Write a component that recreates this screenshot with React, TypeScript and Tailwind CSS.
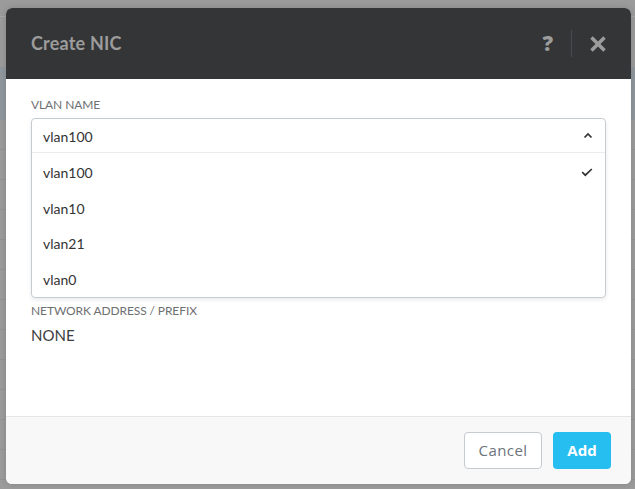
import React from "react";

const options = ["vlan100", "vlan10", "vlan21", "vlan0"];

export default function App() {
  return (
    <div className="relative w-[635px] h-[489px] overflow-hidden bg-[#9b9b9b]" style={{ fontFamily: "Lato, 'Open Sans', sans-serif" }}>
      {/* dimmed page behind */}
      <div className="flex flex-col">
        <div className="h-[17px] border-b border-[#a8a8a8]" />
        <div className="h-[50px]" />
        <div className="h-[53px] bg-[#8f979d]" />
        {Array.from({ length: 12 }).map((_, i) => (
          <div key={i} className="h-[30px] border-b border-[#939393]" />
        ))}
      </div>

      {/* modal */}
      <div className="absolute left-[6px] top-[8px] w-[625px] h-[476px] flex flex-col rounded-[6px] overflow-hidden bg-white shadow-[0_0_6px_rgba(0,0,0,0.15)]">
        <div className="h-[71px] shrink-0 bg-[#343537] flex items-center justify-between pl-[25px] pr-[24px]">
          <span className="text-[18px] font-bold text-[#9c9c9c] tracking-[0.2px]">Create NIC</span>
          <div className="flex items-center h-full">
            <span className="text-[21px] font-black text-[#9c9c9c] leading-none mr-[18px]" style={{ fontFamily: "'Open Sans', sans-serif" }}>?</span>
            <div className="w-px h-[27px] bg-[#4a4b4e]" />
            <svg width="18" height="16" viewBox="0 0 18 16" className="ml-[17px]">
              <path d="M2.5 1.5 L15.5 14.5 M15.5 1.5 L2.5 14.5" stroke="#9c9c9c" strokeWidth="3.6" strokeLinecap="butt" />
            </svg>
          </div>
        </div>

        <div className="flex-1 flex flex-col px-[25px] pt-[18px]">
          <div className="text-[12px] leading-[16px] text-[#6e6f71] tracking-[-0.1px]">VLAN NAME</div>
          <div className="mt-[5px] w-[575px] flex flex-col rounded-[4px] border border-[#c6cbd0] bg-white shadow-[0_2px_4px_rgba(0,0,0,0.08)]">
            <div className="h-[34px] flex items-center justify-between pl-[11px] pr-[12px] pt-[2px] border-b border-[#ececec]">
              <span className="text-[14px] text-[#333]">vlan100</span>
              <svg width="10" height="7" viewBox="0 0 10 7" className="-mt-[2px]">
                <path d="M1.5 5.5 L5 2 L8.5 5.5" fill="none" stroke="#333" strokeWidth="1.7" />
              </svg>
            </div>
            <div className="flex flex-col pt-[2px]">
              {options.map((o, i) => (
                <div key={o} className="h-[35.5px] flex items-center justify-between pl-[11px] pr-[12px]">
                  <span className="text-[14px] text-[#333]">{o}</span>
                  {i === 0 && (
                    <svg width="12" height="9" viewBox="0 0 12 9">
                      <path d="M1.2 4.2 L4.3 7.2 L10.8 1" fill="none" stroke="#333" strokeWidth="1.7" />
                    </svg>
                  )}
                </div>
              ))}
            </div>
          </div>
          <div className="mt-[5px] text-[12px] leading-[16px] text-[#6e6f71] tracking-[-0.1px]">NETWORK ADDRESS / PREFIX</div>
          <div className="mt-[6px] text-[15px] leading-[20px] text-[#3d3d3d]">NONE</div>
        </div>

        <div className="h-[68px] shrink-0 bg-[#f8f8f8] border-t border-[#e6e6e6] flex items-center justify-end gap-[11px] pr-[20px]" style={{ fontFamily: "'Open Sans', sans-serif" }}>
          <button className="h-[37px] w-[78px] rounded-[4px] border border-[#c6cbd0] bg-white text-[15px] text-[#6d737a] tracking-[0.4px]">Cancel</button>
          <button className="h-[37px] w-[58px] rounded-[4px] bg-[#26bdf0] text-[15px] font-bold text-white">Add</button>
        </div>
      </div>
    </div>
  );
}
